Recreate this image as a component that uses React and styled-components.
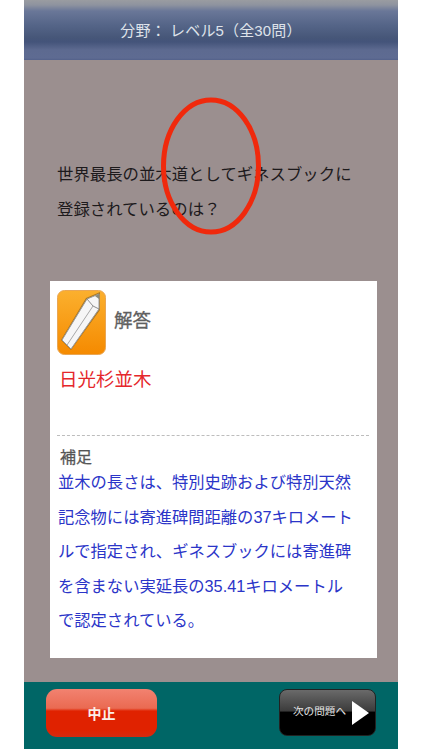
import React from "react";
import styled, { createGlobalStyle } from "styled-components";

const GlobalStyle = createGlobalStyle`
  html, body {
    margin: 0;
    padding: 0;
    background: #fff;
    font-family: "Liberation Sans", "Noto Sans CJK JP", sans-serif;
  }
`;

const Screen = styled.div`
  box-sizing: border-box;
  width: 422px;
  height: 750px;
  padding: 0 24px;
  background: #fff;
`;

const Phone = styled.div`
  width: 374px;
  height: 749px;
  display: flex;
  flex-direction: column;
  overflow: hidden;
  position: relative;
`;

const Header = styled.div`
  height: 60px;
  flex-shrink: 0;
  display: flex;
  align-items: center;
  justify-content: center;
  box-sizing: border-box;
  padding-bottom: 2px;
  background: linear-gradient(
    to bottom,
    #9a9ca1 0px,
    #8e939f 5px,
    #6a7798 11px,
    #566689 24px,
    #465678 38px,
    #44547a 42px,
    #5d6a90 50px,
    #5e6b92 58px,
    #53618a 60px
  );
  color: #dfe3ea;
  font-size: 15px;
  letter-spacing: 0.15px;
`;

const Body = styled.div`
  flex: 1;
  display: flex;
  flex-direction: column;
  background: #9b8f8f;
`;

const Question = styled.div`
  padding: 97px 0 0 33px;
  height: 221px;
  box-sizing: border-box;
  font-size: 16.4px;
  line-height: 35px;
  color: #1d1a1c;
  white-space: nowrap;
`;

const Mark = styled.svg`
  position: absolute;
  left: 136px;
  top: 96px;
`;

const Card = styled.div`
  box-sizing: border-box;
  width: 327px;
  height: 377px;
  margin-left: 26px;
  background: #fff;
  display: flex;
  flex-direction: column;
`;

const AnswerHead = styled.div`
  display: flex;
  align-items: center;
  gap: 8px;
  padding: 9px 0 0 7px;
`;

const AnswerLabel = styled.div`
  margin-bottom: 7px;
  font-size: 18.5px;
  color: #5f5f5f;
  -webkit-text-stroke: 0.3px #5f5f5f;
`;

const AnswerText = styled.div`
  padding: 10px 0 0 9px;
  height: 80px;
  box-sizing: border-box;
  font-size: 18.5px;
  line-height: 30px;
  color: #e5272b;
`;

const Divider = styled.div`
  margin: 0 8px 0 7px;
  border-top: 1px dashed #bdbdbd;
`;

const NoteLabel = styled.div`
  padding: 9px 0 0 10px;
  font-size: 16px;
  line-height: 26px;
  color: #555;
  -webkit-text-stroke: 0.25px #555;
`;

const NoteText = styled.div`
  padding: 0 0 0 8px;
  font-size: 16.3px;
  line-height: 34.5px;
  margin-top: -6px;
  color: #2b35c8;
  white-space: nowrap;
`;

const Footer = styled.div`
  height: 67px;
  flex-shrink: 0;
  display: flex;
  align-items: flex-start;
  justify-content: space-between;
  box-sizing: border-box;
  padding: 7px 22px 0 22px;
  background: #006666;
`;

const StopButton = styled.div`
  box-sizing: border-box;
  width: 111px;
  height: 48px;
  border-radius: 11px;
  display: flex;
  align-items: center;
  justify-content: center;
  color: #fbeee8;
  font-size: 14px;
  font-weight: 700;
  background: linear-gradient(
    to bottom,
    #f28270 0%,
    #ea6a52 40%,
    #e02200 46%,
    #e02200 85%,
    #d42a10 100%
  );
`;

const NextButton = styled.div`
  box-sizing: border-box;
  width: 97px;
  height: 47px;
  border-radius: 8px;
  border: 1px solid #222;
  display: flex;
  align-items: center;
  justify-content: flex-end;
  gap: 6px;
  padding-right: 6px;
  color: #e4e4e4;
  font-size: 10.6px;
  background: linear-gradient(to bottom, #6a6a6a 0%, #3c3c3c 46%, #000 50%, #000 100%);
`;

const NextLabel = styled.span`
  margin-bottom: 4px;
`;

const PencilIcon = () => (
  <svg width="49" height="65" viewBox="0 0 49 65">
    <defs>
      <linearGradient id="orange" x1="0" y1="0" x2="0" y2="1">
        <stop offset="0" stopColor="#fbb02e" />
        <stop offset="1" stopColor="#f58a00" />
      </linearGradient>
    </defs>
    <rect x="0.5" y="0.5" width="48" height="64" rx="7" fill="url(#orange)" stroke="#e9a654" />
    <path d="M29 8 L43 2 L43 20 L14 60 L4 50 Z" fill="#7a5a20" opacity="0.6" />
    <path d="M30 9 L42 4 L42 19 L14 59 L5 50 Z" fill="#f6f6f6" stroke="#9a9a9a" strokeWidth="1" strokeLinejoin="round" />
    <path d="M30 9 L36 16 L42 19" fill="none" stroke="#8d8d8d" strokeWidth="1" />
    <path d="M36 16 L10 55" stroke="#a8a8a8" strokeWidth="1" />
    <path d="M38 6 L42 4 L42 9 Z" fill="#8a8a7a" />
  </svg>
);

export default function App() {
  return (
    <Screen>
      <GlobalStyle />
      <Phone>
        <Header>分野： レベル5（全30問）</Header>
        <Body>
          <Question>
            世界最長の並木道としてギネスブックに
            <br />
            登録されているのは？
          </Question>
          <Mark width="102" height="140" viewBox="0 0 102 140">
            <ellipse cx="51" cy="70" rx="47.5" ry="66" fill="none" stroke="#f0290c" strokeWidth="5" />
          </Mark>
          <Card>
            <AnswerHead>
              <PencilIcon />
              <AnswerLabel>解答</AnswerLabel>
            </AnswerHead>
            <AnswerText>日光杉並木</AnswerText>
            <Divider />
            <NoteLabel>補足</NoteLabel>
            <NoteText>
              並木の長さは、特別史跡および特別天然
              <br />
              記念物には寄進碑間距離の37キロメート
              <br />
              ルで指定され、ギネスブックには寄進碑
              <br />
              を含まない実延長の35.41キロメートル
              <br />
              で認定されている。
            </NoteText>
          </Card>
        </Body>
        <Footer>
          <StopButton>中止</StopButton>
          <NextButton>
            <NextLabel>次の問題へ</NextLabel>
            <svg width="17" height="24" viewBox="0 0 17 24">
              <path d="M0 0 L17 12 L0 24 Z" fill="#fff" />
            </svg>
          </NextButton>
        </Footer>
      </Phone>
    </Screen>
  );
}
